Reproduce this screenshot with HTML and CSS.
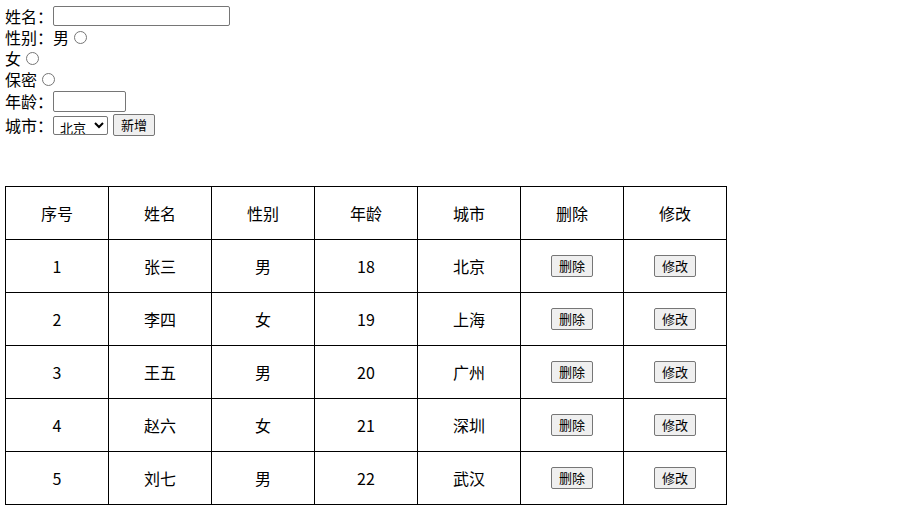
FILE: index.html
```html
<!DOCTYPE html>
<html lang="zh">
<head>
<meta charset="utf-8">
<title>表格</title>
<link rel="stylesheet" href="styles.css">
</head>
<body>
<div class="form">
  <div class="row r1"><span>姓名：</span><input class="name" type="text"></div>
  <div class="row r2"><span>性别：男</span><input class="radio" type="radio" name="sex"></div>
  <div class="row r3"><span>女</span><input class="radio" type="radio" name="sex"></div>
  <div class="row r4"><span>保密</span><input class="radio" type="radio" name="sex"></div>
  <div class="row r5"><span>年龄：</span><input class="age" type="text"></div>
  <div class="row r6"><span>城市：</span><select class="city"><option>北京</option><option>上海</option></select><button class="add">新增</button></div>
</div>
<table class="list">
  <thead>
    <tr><th>序号</th><th>姓名</th><th>性别</th><th>年龄</th><th>城市</th><th>删除</th><th>修改</th></tr>
  </thead>
  <tbody>
    <tr><td>1</td><td>张三</td><td>男</td><td>18</td><td>北京</td><td><button class="btn">删除</button></td><td><button class="btn">修改</button></td></tr>
    <tr><td>2</td><td>李四</td><td>女</td><td>19</td><td>上海</td><td><button class="btn">删除</button></td><td><button class="btn">修改</button></td></tr>
    <tr><td>3</td><td>王五</td><td>男</td><td>20</td><td>广州</td><td><button class="btn">删除</button></td><td><button class="btn">修改</button></td></tr>
    <tr><td>4</td><td>赵六</td><td>女</td><td>21</td><td>深圳</td><td><button class="btn">删除</button></td><td><button class="btn">修改</button></td></tr>
    <tr><td>5</td><td>刘七</td><td>男</td><td>22</td><td>武汉</td><td><button class="btn">删除</button></td><td><button class="btn">修改</button></td></tr>
  </tbody>
</table>
</body>
</html>
```
FILE: styles.css
```css
html, body {
  background: #fff;
}
body {
  margin: 0;
  padding: 5px 5px 0 5px;
  font-family: "Noto Sans CJK SC", "Microsoft YaHei", sans-serif;
  font-size: 16px;
  color: #000;
}
.form {
  display: flex;
  flex-direction: column;
}
.row {
  display: flex;
  align-items: center;
  line-height: 21px;
}
.r1 { height: 22px; }
.r2 { height: 21px; }
.r3 { height: 21px; }
.r4 { height: 21px; }
.r5 { height: 23px; }
.r6 { height: 24px; }
input.name, input.age {
  box-sizing: border-box;
  margin: 0;
  height: 20px;
  border: 1px solid #767676;
  border-radius: 2px;
  padding: 1px 2px;
  font-size: 13px;
  background: #fff;
}
input.name { width: 177px; }
input.age { width: 73px; height: 21px; }
.radio {
  margin: 0 0 0 5px;
  width: 13px;
  height: 13px;
}
.city {
  box-sizing: border-box;
  margin: 0;
  width: 55px;
  height: 19px;
  font-family: "Noto Sans CJK SC", sans-serif;
  font-size: 13px;
  line-height: 15px;
  padding: 0 0 0 2px;
  border: 1px solid #767676;
  border-radius: 2px;
  background: #fff;
}
.add, .btn {
  box-sizing: border-box;
  font-family: "Noto Sans CJK SC", sans-serif;
  font-size: 13px;
  line-height: 16px;
  background: #efefef;
  border: 1px solid #767676;
  border-radius: 2px;
  color: #000;
  width: 42px;
  height: 22px;
  padding: 0;
}
.add { margin-left: 5px; }
.list {
  margin-top: 49px;
  border-collapse: collapse;
  table-layout: fixed;
  width: 722px;
}
.list th, .list td {
  border: 1px solid #000;
  height: 53px;
  padding: 0;
  text-align: center;
  font-weight: normal;
  box-sizing: border-box;
}
.btn {
  display: block;
  margin: 0 auto;
}
```
